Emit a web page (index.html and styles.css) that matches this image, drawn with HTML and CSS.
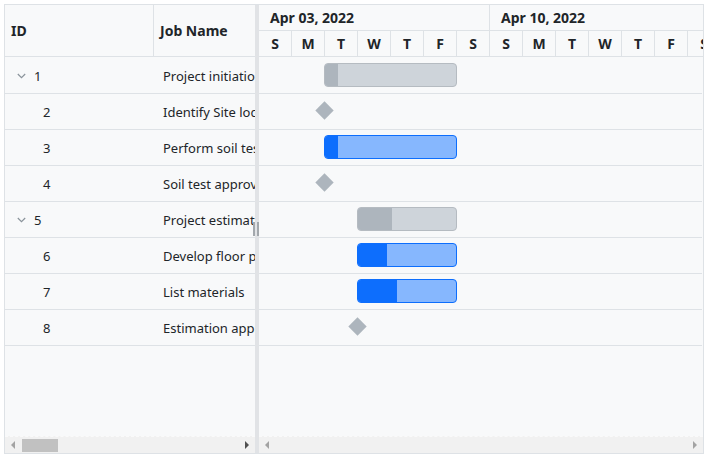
FILE: index.html
```html
<!DOCTYPE html>
<html>
<head>
<meta charset="utf-8">
<link rel="stylesheet" href="styles.css">
</head>
<body>
<div class="gantt">
  <div class="pane left">
    <div class="grid-head">
      <div class="hcell col-id">ID</div>
      <div class="hcell col-name">Job Name</div>
    </div>
    <div class="grid-body">
      <div class="row"><div class="cell col-id"><span class="chev"><svg width="9" height="6" viewBox="0 0 9 6"><path d="M0.8 1 L4.5 4.6 L8.2 1" fill="none" stroke="#8a939b" stroke-width="1.2"/></svg></span>1</div><div class="cell col-name">Project initiation</div></div>
      <div class="row"><div class="cell col-id child">2</div><div class="cell col-name">Identify Site location</div></div>
      <div class="row"><div class="cell col-id child">3</div><div class="cell col-name">Perform soil test</div></div>
      <div class="row"><div class="cell col-id child">4</div><div class="cell col-name">Soil test approval</div></div>
      <div class="row"><div class="cell col-id"><span class="chev"><svg width="9" height="6" viewBox="0 0 9 6"><path d="M0.8 1 L4.5 4.6 L8.2 1" fill="none" stroke="#8a939b" stroke-width="1.2"/></svg></span>5</div><div class="cell col-name">Project estimation</div></div>
      <div class="row"><div class="cell col-id child">6</div><div class="cell col-name">Develop floor plan for estimation</div></div>
      <div class="row"><div class="cell col-id child">7</div><div class="cell col-name">List materials</div></div>
      <div class="row"><div class="cell col-id child">8</div><div class="cell col-name">Estimation approval</div></div>
    </div>
    <div class="hscroll">
      <span class="arr arr-l"></span>
      <span class="thumb"></span>
      <span class="arr arr-r dark"></span>
    </div>
  </div>
  <div class="splitter"><span class="grip"></span></div>
  <div class="pane right">
    <div class="tl-head">
      <div class="weeks">
        <div class="week">Apr 03, 2022</div>
        <div class="week">Apr 10, 2022</div>
      </div>
      <div class="days">
        <div class="day">S</div><div class="day">M</div><div class="day">T</div><div class="day">W</div><div class="day">T</div><div class="day">F</div><div class="day">S</div>
        <div class="day">S</div><div class="day">M</div><div class="day">T</div><div class="day">W</div><div class="day">T</div><div class="day">F</div><div class="day">S</div>
      </div>
    </div>
    <div class="tl-body">
      <div class="trow"><div class="bar parent" style="left:65px;width:133px"><div class="prog" style="width:13px"></div></div></div>
      <div class="trow"><div class="milestone" style="left:59px"></div></div>
      <div class="trow"><div class="bar task" style="left:65px;width:133px"><div class="prog" style="width:13px"></div></div></div>
      <div class="trow"><div class="milestone" style="left:59px"></div></div>
      <div class="trow"><div class="bar parent" style="left:98px;width:100px"><div class="prog" style="width:34px"></div></div></div>
      <div class="trow"><div class="bar task" style="left:98px;width:100px"><div class="prog" style="width:29px"></div></div></div>
      <div class="trow"><div class="bar task" style="left:98px;width:100px"><div class="prog" style="width:39px"></div></div></div>
      <div class="trow"><div class="milestone" style="left:92px"></div></div>
    </div>
    <div class="hscroll">
      <span class="arr arr-l"></span>
      <span class="spacer"></span>
      <span class="arr arr-r"></span>
    </div>
  </div>
</div>
</body>
</html>
```

FILE: styles.css
```css
* { box-sizing: border-box; }
html, body { margin: 0; padding: 0; background: #ffffff; }
body {
  font-family: "Noto Sans", "Open Sans", sans-serif;
  font-size: 13px;
  color: #212529;
}
.gantt {
  margin: 4px;
  width: 700px;
  height: 450px;
  border: 1px solid #dee2e6;
  background: #f8f9fa;
  display: flex;
  overflow: hidden;
}
.pane {
  display: flex;
  flex-direction: column;
  overflow: hidden;
  position: relative;
}
.left { width: 250px; flex: none; }
.right { flex: 1; }
.splitter {
  width: 4px;
  flex: none;
  background: #e1e3e6;
  position: relative;
}
.grip {
  position: absolute;
  left: -2px;
  top: 217px;
  width: 6px;
  height: 14px;
  border-left: 2px solid #a3a8ad;
  border-right: 2px solid #a3a8ad;
}
.grid-head {
  height: 52px;
  flex: none;
  display: flex;
  border-bottom: 1px solid #dee2e6;
}
.hcell {
  display: flex;
  align-items: center;
  font-weight: 700;
  font-size: 14px;
  padding-left: 6px;
}
.grid-head .col-id { width: 149px; border-right: 1px solid #dee2e6; }
.grid-head .col-name { flex: 1; white-space: nowrap; }
.grid-body { flex: 1; overflow: hidden; padding-top: 1px; }
.row {
  height: 36px;
  border-bottom: 1px solid #dee2e6;
  display: flex;
  align-items: center;
  white-space: nowrap;
}
.cell { overflow: hidden; }
.row .col-id {
  width: 150px;
  flex: none;
  padding-left: 12px;
  display: flex;
  align-items: center;
}
.row .col-id.child { padding-left: 38px; }
.chev {
  width: 17px;
  display: inline-flex;
  align-items: center;
}
.row .col-name {
  flex: 1;
  padding-left: 8px;
  overflow: hidden;
  white-space: nowrap;
}
.hscroll {
  height: 17px;
  flex: none;
  background: #f1f1f1;
  border-top: 1px dashed #fafafa;
  display: flex;
  align-items: center;
  position: relative;
}
.arr {
  width: 0;
  height: 0;
  border-top: 4px solid transparent;
  border-bottom: 4px solid transparent;
  flex: none;
}
.arr-l { border-right: 4px solid #a3a3a3; margin-left: 6px; }
.arr-r { border-left: 4px solid #a3a3a3; margin-right: 6px; }
.arr-r.dark { border-left-color: #505050; }
.thumb {
  width: 36px;
  height: 13px;
  background: #c1c1c1;
  margin-left: 7px;
  margin-right: auto;
}
.spacer { flex: 1; }
.tl-head { flex: none; }
.weeks, .days { display: flex; height: 26px; border-bottom: 1px solid #dee2e6; }
.week {
  width: 231px;
  flex: none;
  border-right: 1px solid #dee2e6;
  font-weight: 700;
  font-size: 14px;
  padding-left: 11px;
  display: flex;
  align-items: center;
  white-space: nowrap;
}
.day {
  width: 33px;
  flex: none;
  border-right: 1px solid #dee2e6;
  font-weight: 700;
  font-size: 14px;
  display: flex;
  align-items: center;
  justify-content: center;
}
.tl-body { flex: 1; overflow: hidden; padding-top: 1px; }
.trow {
  height: 36px;
  border-bottom: 1px solid #dee2e6;
  position: relative;
  width: 443px;
}
.bar {
  position: absolute;
  top: 5px;
  height: 24px;
  border-radius: 4px;
  overflow: hidden;
}
.bar .prog { height: 100%; }
.bar.parent { background: #ced4da; border: 1px solid #b5bbc1; }
.bar.parent .prog { background: #adb5bd; }
.bar.task { background: #86b7fe; border: 1px solid #0d6efd; }
.bar.task .prog { background: #0d6efd; }
.milestone {
  position: absolute;
  top: 10px;
  width: 13px;
  height: 13px;
  background: #adb5bd;
  transform: rotate(45deg);
}
```
